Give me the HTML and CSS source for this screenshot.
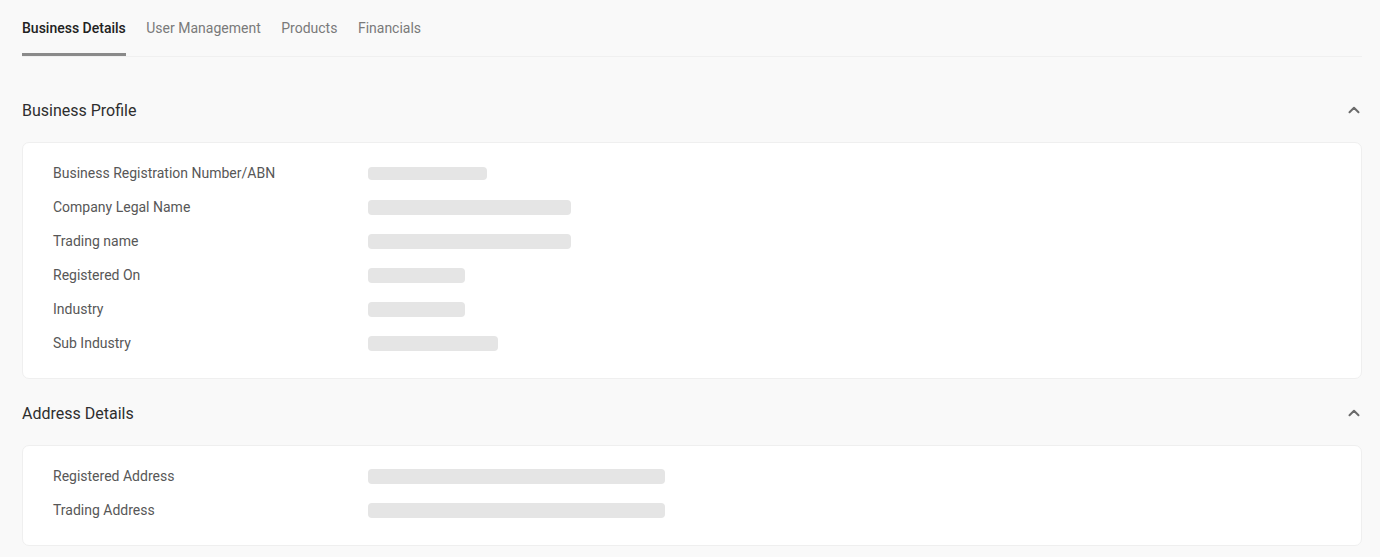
FILE: index.html
```html
<!DOCTYPE html>
<html lang="en">
<head>
<meta charset="utf-8">
<title>Business Details</title>
<link rel="stylesheet" href="styles.css">
</head>
<body>
<div class="page">
  <nav class="tabs">
    <a class="tab tab-active">Business Details</a>
    <a class="tab">User Management</a>
    <a class="tab">Products</a>
    <a class="tab">Financials</a>
    <span class="tabs-rest"></span>
  </nav>

  <section class="section section-first">
    <header class="section-header">
      <h2 class="section-title">Business Profile</h2>
      <svg class="chevron" width="16" height="16" viewBox="0 0 16 16" aria-hidden="true"><path d="M3.5 10.2 L8 5.8 L12.5 10.2" fill="none" stroke="#6b6b6b" stroke-width="2" stroke-linecap="round" stroke-linejoin="round"/></svg>
    </header>
    <div class="card">
      <div class="row"><span class="label">Business Registration Number/ABN</span><span class="skeleton skeleton-thin" style="width:119px"></span></div>
      <div class="row"><span class="label">Company Legal Name</span><span class="skeleton" style="width:203px"></span></div>
      <div class="row"><span class="label">Trading name</span><span class="skeleton" style="width:203px"></span></div>
      <div class="row"><span class="label">Registered On</span><span class="skeleton" style="width:97px"></span></div>
      <div class="row"><span class="label">Industry</span><span class="skeleton" style="width:97px"></span></div>
      <div class="row"><span class="label">Sub Industry</span><span class="skeleton" style="width:130px"></span></div>
    </div>
  </section>

  <section class="section">
    <header class="section-header">
      <h2 class="section-title">Address Details</h2>
      <svg class="chevron" width="16" height="16" viewBox="0 0 16 16" aria-hidden="true"><path d="M3.5 10.2 L8 5.8 L12.5 10.2" fill="none" stroke="#6b6b6b" stroke-width="2" stroke-linecap="round" stroke-linejoin="round"/></svg>
    </header>
    <div class="card">
      <div class="row"><span class="label">Registered Address</span><span class="skeleton" style="width:297px"></span></div>
      <div class="row"><span class="label">Trading Address</span><span class="skeleton" style="width:297px"></span></div>
    </div>
  </section>
</div>
</body>
</html>
```

FILE: styles.css
```css
* {
  box-sizing: border-box;
}

html, body {
  margin: 0;
  padding: 0;
  background: #f9f9f9;
}

body {
  font-family: Roboto, "Liberation Sans", Arial, sans-serif;
  color: #333;
  -webkit-font-smoothing: antialiased;
}

.page {
  padding: 0 18px 0 22px;
}

.tabs {
  display: flex;
  align-items: flex-end;
  gap: 20.5px;
  border-bottom: 1px solid #f0f0f0;
}

.tab {
  display: block;
  padding-top: 18px;
  padding-bottom: 15px;
  line-height: 20px;
  font-size: 14px;
  color: #7a7a7a;
  border-bottom: 3px solid transparent;
  white-space: nowrap;
  cursor: pointer;
}

.tab-active {
  color: #222;
  font-weight: 500;
  border-bottom-color: #8a8a8a;
}

.tabs-rest {
  flex: 1;
}

.section-first {
  padding-top: 33px;
}

.section {
  margin-bottom: 14px;
}

.section-header {
  display: flex;
  align-items: center;
  justify-content: space-between;
  height: 40px;
  margin-bottom: 12px;
}

.section-title {
  margin: 0;
  font-size: 16px;
  font-weight: 400;
  color: #2e2e2e;
}

.chevron {
  display: block;
  flex: none;
}

.card {
  background: #fff;
  border: 1px solid #efefef;
  border-radius: 7px;
  padding: 13px 30px 18px;
}

.row {
  display: flex;
  align-items: center;
  height: 34px;
}

.label {
  width: 315px;
  flex: none;
  font-size: 14px;
  color: #575757;
}

.skeleton {
  display: block;
  height: 15px;
  border-radius: 4px;
  background: #e5e5e5;
}

.skeleton-thin {
  height: 13px;
}
```
